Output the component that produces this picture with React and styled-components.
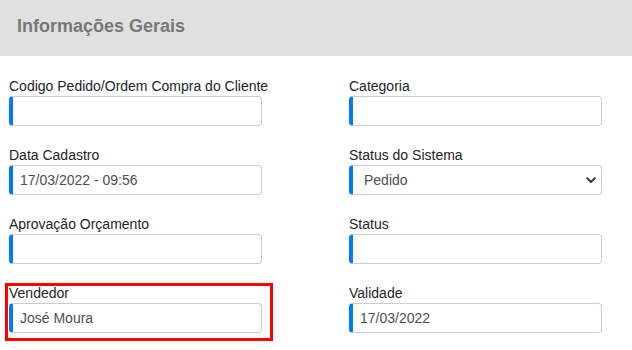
import React from 'react';
import styled, { createGlobalStyle } from 'styled-components';

const GlobalStyle = createGlobalStyle`
  html, body {
    margin: 0;
    padding: 0;
    background: #ffffff;
  }
  body {
    font-family: "Liberation Sans", Arial, sans-serif;
    color: #212529;
  }
`;

const fields = [
  { label: 'Codigo Pedido/Ordem Compra do Cliente', value: '' },
  { label: 'Categoria', value: '' },
  { label: 'Data Cadastro', value: '17/03/2022 - 09:56' },
  { label: 'Status do Sistema', value: 'Pedido', select: true },
  { label: 'Aprovação Orçamento', value: '' },
  { label: 'Status', value: '' },
  { label: 'Vendedor', value: 'José Moura', highlight: true },
  { label: 'Validade', value: '17/03/2022' },
];

const App = () => {
  return (
    <>
      <GlobalStyle />
      <Panel>
        <PanelHeader>
          <Title>Informações Gerais</Title>
        </PanelHeader>
        <FormGrid>
          {fields.map((f) => (
            <Field key={f.label} $highlight={f.highlight}>
              <Label>{f.label}</Label>
              {f.select ? (
                <SelectWrap>
                  <Select defaultValue={f.value}>
                    <option value="Pedido">Pedido</option>
                    <option value="Orçamento">Orçamento</option>
                  </Select>
                  <Chevron width="10" height="7" viewBox="0 0 10 7">
                    <path d="M1.2 1.3 L5 5 L8.8 1.3" fill="none" stroke="#343a40" strokeWidth="2" strokeLinecap="round" strokeLinejoin="round" />
                  </Chevron>
                </SelectWrap>
              ) : (
                <Input defaultValue={f.value} />
              )}
            </Field>
          ))}
        </FormGrid>
      </Panel>
    </>
  );
};

const Panel = styled.div`
  width: 632px;
  min-height: 350px;
  background: #ffffff;
`;

const PanelHeader = styled.div`
  height: 56px;
  background: #e0e0e0;
  display: flex;
  align-items: center;
  padding: 0 17px;
  box-sizing: border-box;
`;

const Title = styled.h2`
  margin: 0 0 4px;
  font-size: 18px;
  font-weight: 700;
  color: #777777;
`;

const FormGrid = styled.div`
  display: grid;
  grid-template-columns: 253px 253px;
  column-gap: 87px;
  row-gap: 20px;
  padding: 21px 0 17px 9px;
`;

const Field = styled.div`
  position: relative;
  display: flex;
  flex-direction: column;

  ${({ $highlight }) =>
    $highlight &&
    `
    &::after {
      content: '';
      position: absolute;
      top: -1px;
      left: -4px;
      right: -11px;
      bottom: -8px;
      border: 3px solid #ff0000;
      pointer-events: none;
    }
  `}
`;

const Label = styled.label`
  font-size: 14px;
  line-height: 19px;
  color: #212529;
  white-space: nowrap;
`;

const Input = styled.input`
  box-sizing: border-box;
  height: 30px;
  width: 100%;
  border: 1px solid #cccccc;
  border-left: 4px solid #007bff;
  border-radius: 4px;
  padding: 0 0 0 7px;
  font-family: "Liberation Sans", Arial, sans-serif;
  font-size: 14px;
  color: #495057;
  background: #ffffff;
  outline: none;
`;

const SelectWrap = styled.div`
  position: relative;
  height: 30px;
`;

const Select = styled.select`
  appearance: none;
  -webkit-appearance: none;
  box-sizing: border-box;
  height: 30px;
  width: 100%;
  border: 1px solid #cccccc;
  border-left: 4px solid #007bff;
  border-radius: 4px;
  padding: 0 24px 0 11px;
  font-family: "Liberation Sans", Arial, sans-serif;
  font-size: 14px;
  color: #495057;
  background: #ffffff;
  outline: none;
`;

const Chevron = styled.svg`
  position: absolute;
  right: 6px;
  top: 12px;
  pointer-events: none;
`;

export default App;
